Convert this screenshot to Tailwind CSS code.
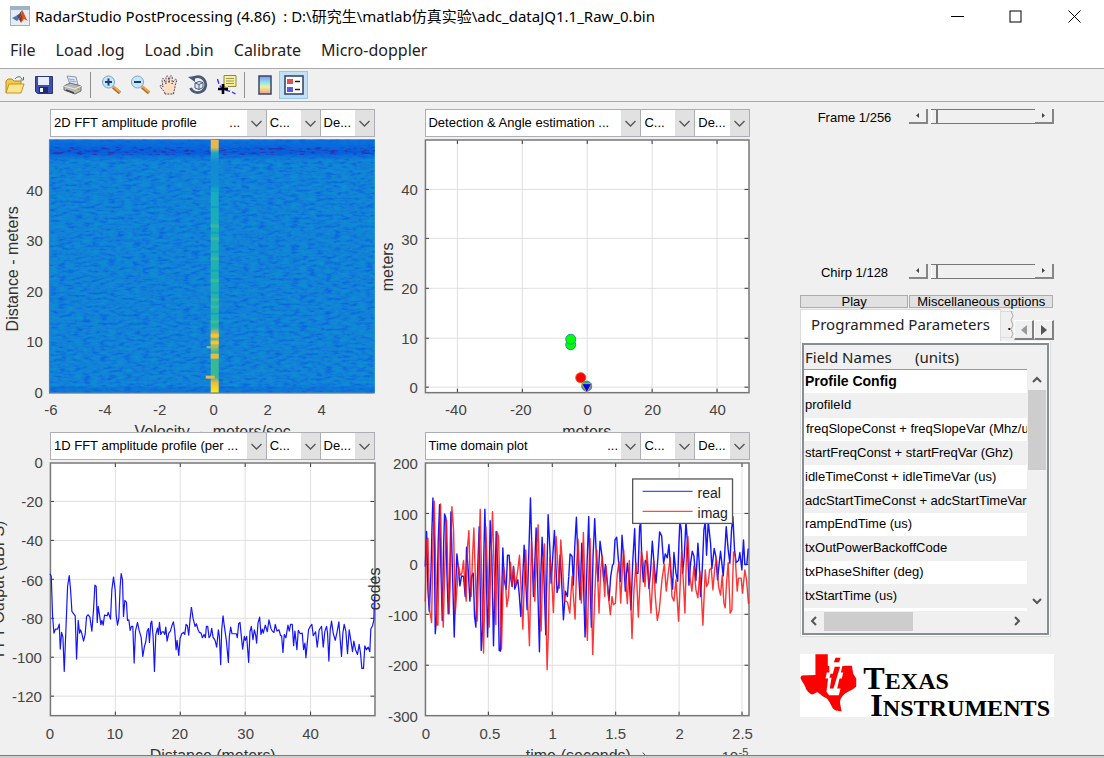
<!DOCTYPE html>
<html lang="en">
<head>
<meta charset="utf-8">
<title>RadarStudio PostProcessing</title>
<script src="https://cdn.jsdelivr.net/npm/@tailwindcss/browser@4"></script>
</head>
<body class="flex h-screen flex-col overflow-hidden bg-[#f0f0f0] font-['Liberation_Sans',Arial,sans-serif] text-[13px] text-black">

<header class="flex h-8 shrink-0 items-center bg-white pl-[10px]">
  <svg class="size-5 shrink-0" viewBox="0 0 20 20" aria-hidden="true">
    <rect x=".5" y=".5" width="19" height="19" fill="#e6edf3" stroke="#9fb0be"/>
    <rect x="1" y="1" width="18" height="3" fill="#9db3c6"/>
    <path d="M2 12l4-2 3 3-2 2z" fill="#3f78b5"/>
    <path d="M6 10l3-2 3-4-1 6-2 3z" fill="#5a4a6b"/>
    <path d="M12 4c2 2 3 7 6 11l-4-2-3 4-2-4c2-1 3-5 3-9z" fill="#d9531e"/>
    <path d="M12 5c0 4 0 7-1 11l-2-3c2-2 3-5 3-8z" fill="#8a2a1a"/>
  </svg>
  <h1 class="grow pl-[5px] font-['Noto_Sans','Noto_Sans_CJK_SC',sans-serif] text-[15px] whitespace-pre">RadarStudio PostProcessing (4.86)  : D:\研究生\matlab仿真实验\adc_dataJQ1.1_Raw_0.bin</h1>
  <button class="flex h-8 w-[58px] items-center justify-center" aria-label="Minimize"><svg class="size-[13px]" viewBox="0 0 13 13"><path d="M0 6.5h13" stroke="#000"/></svg></button>
  <button class="flex h-8 w-[58px] items-center justify-center" aria-label="Maximize"><svg class="size-[13px]" viewBox="0 0 13 13"><rect x="1" y="1" width="11" height="11" fill="none" stroke="#000"/></svg></button>
  <button class="flex h-8 w-[60px] items-center justify-center" aria-label="Close"><svg class="size-[13px]" viewBox="0 0 13 13"><path d="M.5.5l12 12M12.5.5l-12 12" stroke="#000"/></svg></button>
</header>

<nav class="flex h-9 shrink-0 items-center gap-5 bg-white pl-[10px] font-['Noto_Sans',sans-serif] text-[16px] text-[#222]">
  <button>File</button><button>Load .log</button><button>Load .bin</button><button>Calibrate</button><button>Micro-doppler</button>
</nav>

<div class="flex h-[34px] shrink-0 items-center border-y border-[#a9a9a9] pb-px" role="toolbar" aria-label="Figure tools">
  <button class="flex w-[29px] justify-center" aria-label="Open"><svg class="size-5" viewBox="0 0 20 20">
    <path d="M1 18V6l2-2h4l2 2h7v3" fill="#f2c94c" stroke="#b8891a"/><path d="M1 18l3-9h15l-3 9z" fill="#ffe58a" stroke="#c2952a"/><path d="M10 4c2-3 6-3 7 0m1.500-2v3h-3" fill="none" stroke="#4d6b94"/></svg></button>
  <button class="flex w-[29px] justify-center" aria-label="Save"><svg class="size-5" viewBox="0 0 20 20">
    <path d="M1.500 1.500h17v17h-15l-2-2z" fill="#3d4fb0" stroke="#2a3680"/><rect x="4" y="2" width="11" height="8" fill="#e8edfa"/><rect x="5" y="12" width="9" height="6" fill="#1d2b6e"/><rect x="6" y="13" width="3" height="4" fill="#f2f2f2"/></svg></button>
  <button class="flex w-[29px] justify-center" aria-label="Print"><svg class="size-5" viewBox="0 0 20 20">
    <path d="M4 1l9 1 2 8-8-1z" fill="#dfe9fb" stroke="#8a97b5"/><path d="M6 4l6 1M7 6l6 1" stroke="#7f93c0" stroke-width=".8"/><path d="M1 11l6-3 11 3v5l-6 3-11-4z" fill="#b9b9b9" stroke="#6f6f6f"/><path d="M1 11l11 3 6-3" fill="none" stroke="#eee"/><path d="M3 15l8 3" stroke="#444" stroke-width="1.500"/><circle cx="15.500" cy="14" r="1" fill="#c4a92d"/></svg></button>
  <span class="mr-[5px] ml-[3px] h-[26px] w-px bg-[#8f8f8f]"></span>
  <button class="flex w-[29px] justify-center" aria-label="Zoom in"><svg class="size-5" viewBox="0 0 20 20">
    <path d="M12 12l7 6" stroke="#a8702c" stroke-width="3.500"/><path d="M12 11l7 6" stroke="#f0a850" stroke-width="2"/><circle cx="7.500" cy="7" r="6" fill="#c4e8f8" stroke="#7fa3c4"/><path d="M7.500 3.500v7M4 7h7" stroke="#1c3a80" stroke-width="2"/></svg></button>
  <button class="flex w-[29px] justify-center" aria-label="Zoom out"><svg class="size-5" viewBox="0 0 20 20">
    <path d="M12 12l7 6" stroke="#a8702c" stroke-width="3.500"/><path d="M12 11l7 6" stroke="#f0a850" stroke-width="2"/><circle cx="7.500" cy="7" r="6" fill="#c4e8f8" stroke="#7fa3c4"/><path d="M4 7h7" stroke="#1c3a80" stroke-width="2"/></svg></button>
  <button class="flex w-[29px] justify-center" aria-label="Pan"><svg class="size-5" viewBox="0 0 20 20">
    <path d="M6 19c0-3-4-5-5-8 0-1 2-1 3 1L3 5c0-2 2-2 2.300 0L7 9V2.500c0-2 2.300-2 2.400 0L10 8l1-6c.2-2 2.500-1.500 2.300.3L13 9l2.500-4c1-1.500 2.800-.6 2 1L16 11c0 3-1 4-1.500 8z" fill="#ffe0c4" stroke="#4c4a68" stroke-dasharray="2 1"/></svg></button>
  <button class="flex w-[29px] justify-center" aria-label="Rotate 3D"><svg class="size-5" viewBox="0 0 20 20">
    <path d="M4 4a8 8 0 1 1-1.500 9" fill="none" stroke="#4b5a78" stroke-width="2.800"/><path d="M0 2l7-1v6z" fill="#4b5a78"/><path d="M7 8l4-1.500 4 1v5l-4 2-4-1.500zM7 8l4 1.500 4-2M11 9.500v5" fill="#dfe6f2" stroke="#4b5a78"/></svg></button>
  <button class="flex w-[29px] justify-center" aria-label="Data cursor"><svg class="size-5" viewBox="0 0 20 20">
    <path d="M.5 4c1 4 2 8 6 10s8 2 12 5" fill="none" stroke="#2a2aff" stroke-width="1.300" stroke-dasharray="5 2"/><path d="M7 .5h12v11h-8l-3 3v-3H7z" fill="#f5f0a0" stroke="#8f8a3a"/><path d="M9 3.500h8M9 6h8M9 8.500h8" stroke="#9b9655"/><path d="M6 9v10M1 14h10" stroke="#000" stroke-width="2.600"/></svg></button>
  <span class="mr-[5px] ml-[3px] h-[26px] w-px bg-[#8f8f8f]"></span>
  <button class="flex w-[29px] justify-center" aria-label="Insert colorbar"><svg class="size-5" viewBox="0 0 20 20">
    <defs><linearGradient id="cb" x2="0" y2="1"><stop offset="0" stop-color="#8f8fe0"/><stop offset=".35" stop-color="#8fe0f0"/><stop offset=".6" stop-color="#f0f0a0"/><stop offset="1" stop-color="#f0a080"/></linearGradient></defs>
    <rect x="4" y="1" width="12" height="18" fill="url(#cb)" stroke="#35496e" stroke-width="1.500"/></svg></button>
  <button class="flex h-7 w-[29px] items-center justify-center border border-[#90c8f6] bg-[#c4e0f5]" aria-label="Insert legend" aria-pressed="true"><svg class="size-5" viewBox="0 0 20 20">
    <rect x="1" y="1" width="18" height="18" fill="#fff" stroke="#35496e" stroke-width="1.600"/><rect x="3" y="4" width="6" height="5" fill="#e05050"/><rect x="3" y="12" width="6" height="5" fill="#5a5ae0"/><path d="M11 6.500h5M11 14.500h5" stroke="#222" stroke-width="1.500"/></svg></button>
</div>

<main class="grid grow grid-cols-[751fr_352fr] content-start overflow-hidden border-b border-[#7c7c7c] pt-[7px] pr-px">

  <div class="grid grid-cols-[376fr_375fr]">
  <!-- 2D FFT heat map -->
  <section>
    <div class="grid h-7 grid-cols-[217fr_54fr_55fr] pl-[50px]">
      <div class="relative"><select aria-label="Plot type" class="h-7 w-full appearance-none border border-[#adadb5] bg-white pl-[3px]"><option>2D FFT amplitude profile&nbsp;&nbsp;&nbsp;&nbsp;&nbsp;&nbsp;&nbsp;&nbsp;&nbsp;...</option></select><svg class="pointer-events-none absolute top-px right-px h-[26px] w-[19px] bg-[#e1e1e1]" viewBox="0 0 19 26"><path d="M4.500 11l5 5 5-5" fill="none" stroke="#555" stroke-width="1.300"/></svg></div>
      <div class="relative"><select aria-label="Channel" class="h-7 w-full appearance-none border border-l-0 border-[#adadb5] bg-white pl-[3px]"><option>C...</option></select><svg class="pointer-events-none absolute top-px right-px h-[26px] w-[19px] bg-[#e1e1e1]" viewBox="0 0 19 26"><path d="M4.500 11l5 5 5-5" fill="none" stroke="#555" stroke-width="1.300"/></svg></div>
      <div class="relative"><select aria-label="Device" class="h-7 w-full appearance-none border border-l-0 border-[#adadb5] bg-white pl-[3px]"><option>De...</option></select><svg class="pointer-events-none absolute top-px right-px h-[26px] w-[19px] bg-[#e1e1e1]" viewBox="0 0 19 26"><path d="M4.500 11l5 5 5-5" fill="none" stroke="#555" stroke-width="1.300"/></svg></div>
    </div>
    <svg class="block h-auto w-full" viewBox="0 0 376 295" role="img" aria-label="2D FFT amplitude profile">
      <defs>
        <filter id="noise" x="0" y="0" width="1" height="1" color-interpolation-filters="sRGB">
          <feTurbulence type="fractalNoise" baseFrequency="0.12 0.36" numOctaves="3" seed="4"/>
          <feColorMatrix values="1 0 0 0 0  1 0 0 0 0  1 0 0 0 0  0 0 0 0 1"/>
          <feComponentTransfer>
            <feFuncR type="table" tableValues="0.02 0.02 0.03 0.06 0.08 0.06 0.04 0.04 0.04"/>
            <feFuncG type="table" tableValues="0.34 0.36 0.40 0.46 0.51 0.55 0.58 0.60 0.62"/>
            <feFuncB type="table" tableValues="0.86 0.87 0.88 0.87 0.84 0.83 0.82 0.80 0.80"/>
          </feComponentTransfer>
        </filter>
        <filter id="dark" x="0" y="0" width="1" height="1" color-interpolation-filters="sRGB">
          <feTurbulence type="fractalNoise" baseFrequency="0.13 0.45" numOctaves="2" seed="9"/>
          <feColorMatrix values="0 0 0 0 0.2  0 0 0 0 0.18  0 0 0 0 0.65  5 0 0 0 -2.500"/>
        </filter>
        <linearGradient id="band" x2="0" y2="1"><stop offset="0" stop-color="#0560e0" stop-opacity=".5"/><stop offset=".6" stop-color="#0555dc" stop-opacity=".8"/><stop offset="1" stop-color="#0560e0" stop-opacity="0"/></linearGradient>
        <linearGradient id="ridge" gradientUnits="userSpaceOnUse" x1="0" y1="3" x2="0" y2="256">
          <stop offset="0" stop-color="#e8b84a"/><stop offset=".03" stop-color="#e8b84a"/><stop offset=".05" stop-color="#20a8c0"/><stop offset=".09" stop-color="#1488d4"/><stop offset=".18" stop-color="#1090d0"/><stop offset=".2" stop-color="#16acc0"/><stop offset=".45" stop-color="#20b0b0"/><stop offset=".74" stop-color="#24b4a8"/><stop offset=".77" stop-color="#e8b84a"/><stop offset=".82" stop-color="#a0bc64"/><stop offset=".84" stop-color="#38b894"/><stop offset=".94" stop-color="#38b894"/><stop offset=".96" stop-color="#f0b840"/><stop offset="1" stop-color="#f9f010"/>
        </linearGradient>
      </defs>
      <rect x="50" y="3" width="325" height="253" fill="#1280d8"/>
      <rect x="50" y="3" width="325" height="253" filter="url(#noise)" opacity=".75"/>
      <rect x="50" y="3" width="325" height="21" fill="url(#band)"/>
      <rect x="50" y="11" width="325" height="7" filter="url(#dark)" opacity=".8"/>
      <rect x="50" y="250" width="325" height="6" fill="#0560e0" opacity=".35"/>
      <rect x="211" y="3" width="8" height="253" fill="url(#ridge)"/>
      <path d="M211 89h8M211 102h8M211 122h8M211 144h8M211 163h8M211 170h8M211 185h8" stroke="#48bc90" stroke-width="3" opacity=".7"/>
      <path d="M211 54h8M211 70h8M211 96h8M211 115h8M211 134h8M211 156h8M211 177h8" stroke="#0c98cc" stroke-width="2" opacity=".6"/>
      <path d="M211 199h8M211 206h8" stroke="#fcc430" stroke-width="3"/>
      <path d="M211 202.500h8" stroke="#60bc84" stroke-width="2"/>
      <path d="M211 219.500h8" stroke="#e8b84a" stroke-width="5"/>
      <path d="M206 240.500h9" stroke="#e8b84a" stroke-width="3"/>
      <path d="M207 210.500h9" stroke="#98bc6c" stroke-width="2"/>
      <path d="M50 256.500h325M49.500 3v254" stroke="#777" fill="none"/>
      <g font-size="15" fill="#444">
        <g text-anchor="end"><text x="43" y="59">40</text><text x="43" y="109">30</text><text x="43" y="160">20</text><text x="43" y="210">10</text><text x="43" y="261">0</text></g>
        <g text-anchor="middle"><text x="51" y="278">-6</text><text x="105" y="278">-4</text><text x="160" y="278">-2</text><text x="214" y="278">0</text><text x="268" y="278">2</text><text x="322" y="278">4</text></g>
      </g>
      <g font-size="16" fill="#333" text-anchor="middle"><text x="213" y="300" class="whitespace-pre">Velocity  -  meters/sec</text><text transform="translate(18 132) rotate(-90)">Distance - meters</text></g>
    </svg>
  </section>

  <!-- Detection scatter -->
  <section>
    <div class="grid h-7 grid-cols-[217fr_54fr_55fr] pl-[50px]">
      <div class="relative"><select aria-label="Plot type" class="h-7 w-full appearance-none border border-[#adadb5] bg-white pl-[2px]"><option>Detection &amp; Angle estimation ...</option></select><svg class="pointer-events-none absolute top-px right-px h-[26px] w-[19px] bg-[#e1e1e1]" viewBox="0 0 19 26"><path d="M4.500 11l5 5 5-5" fill="none" stroke="#555" stroke-width="1.300"/></svg></div>
      <div class="relative"><select aria-label="Channel" class="h-7 w-full appearance-none border border-l-0 border-[#adadb5] bg-white pl-[3px]"><option>C...</option></select><svg class="pointer-events-none absolute top-px right-px h-[26px] w-[19px] bg-[#e1e1e1]" viewBox="0 0 19 26"><path d="M4.500 11l5 5 5-5" fill="none" stroke="#555" stroke-width="1.300"/></svg></div>
      <div class="relative"><select aria-label="Device" class="h-7 w-full appearance-none border border-l-0 border-[#adadb5] bg-white pl-[3px]"><option>De...</option></select><svg class="pointer-events-none absolute top-px right-px h-[26px] w-[19px] bg-[#e1e1e1]" viewBox="0 0 19 26"><path d="M4.500 11l5 5 5-5" fill="none" stroke="#555" stroke-width="1.300"/></svg></div>
    </div>
    <svg class="block h-auto w-full" viewBox="0 0 375 295" role="img" aria-label="Detection and angle estimation">
      <rect x="50.500" y="3" width="324" height="253" fill="#fff"/>
      <path d="M82.500 3v253M147.500 3v253M212.500 3v253M277.500 3v253M342.500 3v253M50 52.500h324M50 101.500h324M50 151.500h324M50 201.500h324M50 250.500h324" stroke="#dfdfdf" fill="none"/>
      <path d="M82.500 3v4m0 245v4M147.500 3v4m0 245v4M212.500 3v4m0 245v4M277.500 3v4m0 245v4M342.500 3v4m0 245v4M50 52.500h4m316 0h4M50 101.500h4m316 0h4M50 151.500h4m316 0h4M50 201.500h4m316 0h4M50 250.500h4m316 0h4" stroke="#333" fill="none"/>
      <rect x="50.500" y="3" width="324" height="253" fill="none" stroke="#777" stroke-width="1.500"/>
      <circle cx="196" cy="208" r="5" fill="#0f0" stroke="#2090a8"/><circle cx="196" cy="202.500" r="5" fill="#0f0" stroke="#2090a8"/>
      <circle cx="206" cy="241" r="5" fill="#f00" stroke="#d9531e"/>
      <circle cx="212" cy="249.500" r="5" fill="#30b060" stroke="#2090a8"/><path d="M207 247h10l-5 9z" fill="#00f" stroke="#e0a020"/>
      <g font-size="15" fill="#444">
        <g text-anchor="end"><text x="43" y="58">40</text><text x="43" y="108">30</text><text x="43" y="157">20</text><text x="43" y="207">10</text><text x="43" y="256">0</text></g>
        <g text-anchor="middle"><text x="81" y="278">-40</text><text x="146" y="278">-20</text><text x="213" y="278">0</text><text x="278" y="278">20</text><text x="343" y="278">40</text></g>
      </g>
      <g font-size="16" fill="#333" text-anchor="middle"><text x="212" y="300">meters</text><text transform="translate(18 130) rotate(-90)">meters</text></g>
    </svg>
  </section>

  <!-- 1D FFT range profile -->
  <section>
    <div class="grid h-7 grid-cols-[217fr_54fr_55fr] pl-[50px]">
      <div class="relative"><select aria-label="Plot type" class="h-7 w-full appearance-none border border-[#adadb5] bg-white pl-[3px]"><option>1D FFT amplitude profile (per ...</option></select><svg class="pointer-events-none absolute top-px right-px h-[26px] w-[19px] bg-[#e1e1e1]" viewBox="0 0 19 26"><path d="M4.500 11l5 5 5-5" fill="none" stroke="#555" stroke-width="1.300"/></svg></div>
      <div class="relative"><select aria-label="Channel" class="h-7 w-full appearance-none border border-l-0 border-[#adadb5] bg-white pl-[3px]"><option>C...</option></select><svg class="pointer-events-none absolute top-px right-px h-[26px] w-[19px] bg-[#e1e1e1]" viewBox="0 0 19 26"><path d="M4.500 11l5 5 5-5" fill="none" stroke="#555" stroke-width="1.300"/></svg></div>
      <div class="relative"><select aria-label="Device" class="h-7 w-full appearance-none border border-l-0 border-[#adadb5] bg-white pl-[3px]"><option>De...</option></select><svg class="pointer-events-none absolute top-px right-px h-[26px] w-[19px] bg-[#e1e1e1]" viewBox="0 0 19 26"><path d="M4.500 11l5 5 5-5" fill="none" stroke="#555" stroke-width="1.300"/></svg></div>
    </div>
    <svg class="block h-auto w-full overflow-visible" viewBox="0 0 376 295" role="img" aria-label="1D FFT amplitude profile">
      <rect x="50.500" y="3" width="325" height="253" fill="#fff"/>
      <path d="M115.500 3v253M180.500 3v253M245.500 3v253M311 3v253M50 41.500h325M50 80.500h325M50 119.500h325M50 158.500h325M50 197.500h325M50 236.500h325" stroke="#dfdfdf" fill="none"/>
      <path d="M115.500 3v4m0 245v4M180.500 3v4m0 245v4M245.500 3v4m0 245v4M311 3v4m0 245v4M50 41.500h4m317 0h4M50 80.500h4m317 0h4M50 119.500h4m317 0h4M50 158.500h4m317 0h4M50 197.500h4m317 0h4M50 236.500h4m317 0h4" stroke="#333" fill="none"/>
      <rect x="50.500" y="3" width="325" height="253" fill="none" stroke="#777" stroke-width="1.500"/>
      <g fill="none" stroke="#1414ff" stroke-width="3.600" stroke-linejoin="round">
        <polyline transform="translate(0 -30) scale(.33333)" points="150,432 154,440 158,560 162,610 167,598 173,598 178,583 181,658 185,608 189,622 193,725 198,600 203,470 208,437 212,480 216,545 222,553 226,558 230,688 235,572 239,610 242,600 246,612 251,634 256,612 260,560 265,555 270,562 276,604 281,540 285,466 289,470 292,578 295,530 299,556 303,585 306,572 310,586 314,556 322,558 325,548 328,556 332,568 336,480 341,442 346,480 349,556 353,586 357,566 361,470 364,431 368,450 371,560 375,512 380,518 383,572 387,570 391,602 395,590 399,590 403,700 407,604 413,578 418,602 424,622 429,680 434,650 438,636 442,604 446,596 449,638 453,580 456,574 460,620 464,725 468,615 473,595 476,614 479,578 483,614 487,606 491,606 495,614 498,592 502,634 507,610 512,604 517,586 521,576 525,604 529,660 532,632 537,677 541,626 546,612 551,608 555,614 559,584 563,588 567,616 571,568 575,532"/>
        <polyline transform="translate(190 -30) scale(.33333)" points="5,532 10,566 16,590 20,582 25,600 29,608 34,610 38,624 43,614 47,624 50,590 54,590 58,624 62,618 66,596 70,622 76,632 81,652 86,600 89,620 93,705 96,600 100,558 104,590 110,632 116,698 119,620 123,592 127,612 140,612 143,624 147,582 151,578 155,620 159,658 164,620 167,632 171,620 177,698 181,606 185,590 190,630 194,600 198,616 201,640 205,580 210,562 214,614 218,598 221,610 227,586 233,606 238,570 244,596 248,604 253,608 257,584 262,604 268,600 273,618 276,618 280,668 284,614 289,624 295,586 299,604 303,584 308,584 312,648 316,604 322,660 326,602 332,612 338,610 342,660 346,640 349,684 353,640 357,600 362,590 367,584 371,618 378,606 383,652 389,600 396,590 401,652 406,604 411,590 414,610 418,694 422,600 426,574 431,610 437,632 442,610 448,576 452,630 456,680 460,610 464,584 469,604 474,672 479,600 484,632 489,666 493,634 498,660 504,674 509,644 513,670 517,716 522,716 526,648 531,660 536,652 541,666 544,598 549,588 553,572 555,500"/>
      </g>
      <g font-size="15" fill="#444">
        <g text-anchor="end"><text x="43" y="8">0</text><text x="43" y="47">-20</text><text x="43" y="86">-40</text><text x="43" y="126">-60</text><text x="43" y="164">-80</text><text x="42" y="203">-100</text><text x="42" y="242">-120</text></g>
        <g text-anchor="middle"><text x="50" y="279">0</text><text x="115" y="279">10</text><text x="180" y="279">20</text><text x="246" y="279">30</text><text x="311" y="279">40</text></g>
      </g>
      <g font-size="16" fill="#333" text-anchor="middle"><text x="213" y="301">Distance (meters)</text><text transform="translate(4 129) rotate(-90)">FFT Output (dBFS)</text></g>
    </svg>
  </section>

  <!-- Time domain plot -->
  <section>
    <div class="grid h-7 grid-cols-[217fr_54fr_55fr] pl-[50px]">
      <div class="relative"><select aria-label="Plot type" class="h-7 w-full appearance-none border border-[#adadb5] bg-white pl-[2px]"><option>Time domain plot&nbsp;&nbsp;&nbsp;&nbsp;&nbsp;&nbsp;&nbsp;&nbsp;&nbsp;&nbsp;&nbsp;&nbsp;&nbsp;&nbsp;&nbsp;&nbsp;&nbsp;&nbsp;&nbsp;&nbsp;&nbsp;&nbsp;...</option></select><svg class="pointer-events-none absolute top-px right-px h-[26px] w-[19px] bg-[#e1e1e1]" viewBox="0 0 19 26"><path d="M4.500 11l5 5 5-5" fill="none" stroke="#555" stroke-width="1.300"/></svg></div>
      <div class="relative"><select aria-label="Channel" class="h-7 w-full appearance-none border border-l-0 border-[#adadb5] bg-white pl-[3px]"><option>C...</option></select><svg class="pointer-events-none absolute top-px right-px h-[26px] w-[19px] bg-[#e1e1e1]" viewBox="0 0 19 26"><path d="M4.500 11l5 5 5-5" fill="none" stroke="#555" stroke-width="1.300"/></svg></div>
      <div class="relative"><select aria-label="Device" class="h-7 w-full appearance-none border border-l-0 border-[#adadb5] bg-white pl-[3px]"><option>De...</option></select><svg class="pointer-events-none absolute top-px right-px h-[26px] w-[19px] bg-[#e1e1e1]" viewBox="0 0 19 26"><path d="M4.500 11l5 5 5-5" fill="none" stroke="#555" stroke-width="1.300"/></svg></div>
    </div>
    <svg class="block h-auto w-full overflow-visible" viewBox="0 0 375 295" role="img" aria-label="Time domain plot">
      <rect x="50.500" y="3" width="324" height="253" fill="#fff"/>
      <path d="M113.500 3v253M177.500 3v253M241 3v253M304.500 3v253M367.500 3v253M50 53.500h324M50 104.500h324M50 154.500h324M50 205.500h324" stroke="#dfdfdf" fill="none"/>
      <path d="M113.500 3v4m0 245v4M177.500 3v4m0 245v4M241 3v4m0 245v4M304.500 3v4m0 245v4M367.500 3v4m0 245v4M50 53.500h4m316 0h4M50 104.500h4m316 0h4M50 154.500h4m316 0h4M50 205.500h4m316 0h4" stroke="#333" fill="none"/>
      <rect x="50.500" y="3" width="324" height="253" fill="none" stroke="#777" stroke-width="1.500"/>
      <g fill="none" stroke="#1414ff" stroke-width="4.200" stroke-linejoin="round">
        <polyline transform="translate(-6 -30) scale(.33333)" points="169,410 173,305 177,480 181,545 186,430 189,300 192,204 196,330 199,612 203,560 208,330 212,224 216,420 220,572 224,350 227,252 231,265 234,430 238,552 242,480 246,246 250,400 256,622 260,480 264,372 269,420 273,468 278,438 284,440 289,500 293,352 298,420 303,514 308,440 313,430 317,560 321,592 326,430 331,290 334,470 337,662 341,600 345,370 348,238 352,400 356,622 360,500 364,272 369,380 374,648 378,480 382,305 387,420 391,662 395,664 399,480 402,354 406,450 412,478 416,376 421,376 425,440 430,470 434,410 438,478 442,465 447,450 451,490 456,560 461,460 466,346 470,440 475,540 480,370 485,204 489,350 494,500 498,400 502,294 506,440 512,666 516,440 520,322 525,430 531,615 535,400 538,254 543,350 547,460 552,380 557,302 561,400 565,488 570,465 574,376 578,440 584,570 590,484 596,500 600,440"/>
        <polyline transform="translate(184 -30) scale(.33333)" points="30,440 34,372 40,380 44,466 48,350 53,262 58,400 64,510 69,340 74,450 79,622 85,400 90,260 94,450 98,592 103,380 108,266 113,380 118,454 124,334 130,380 135,454 140,404 146,460 151,512 156,440 161,408 165,400 169,330 174,322 180,400 185,455 190,316 194,370 200,484 206,400 211,440 217,540 222,400 228,296 232,430 238,430 243,290 246,278 250,400 254,456 260,392 266,400 271,476 276,420 281,334 287,410 292,460 298,380 303,306 309,318 315,400 320,372 326,384 331,344 336,420 342,478 346,368 352,430 357,454 361,340 364,275 368,300 372,430 377,380 382,275 386,330 391,466 396,400 401,364 406,378 412,452 418,340 422,400 426,500 431,420 436,300 440,275 444,376 449,275 456,340 460,416 467,356 472,380 477,450 482,400 486,364 494,438 498,380 503,290 509,360 514,400 519,300 523,260 528,360 533,398 540,392 544,368 550,420 555,330 559,404 565,404 569,356"/>
      </g>
      <g fill="none" stroke="#f11" stroke-opacity=".85" stroke-width="4.200" stroke-linejoin="round">
        <polyline transform="translate(-6 -30) scale(.33333)" points="169,516 173,330 177,325 182,540 188,578 192,350 196,214 200,400 203,586 207,586 211,330 215,222 219,480 223,592 228,400 233,270 237,430 241,552 245,380 249,230 254,300 259,552 264,480 269,408 274,436 279,430 284,392 288,470 292,514 296,350 300,302 304,450 307,500 311,380 315,294 319,430 325,574 329,420 334,238 338,430 344,670 348,500 351,290 356,440 361,592 366,400 371,245 376,420 381,584 385,306 389,320 394,500 398,658 402,500 405,412 410,460 414,530 419,500 425,398 430,470 434,410 440,468 447,420 452,376 457,480 462,598 467,440 471,360 476,500 482,648 488,334 493,430 498,514 503,360 508,284 512,450 517,604 522,400 527,342 531,520 535,720 539,600 543,382 548,430 554,548 559,400 562,320 567,400 572,475 576,330 581,400 587,514 592,514 596,516"/>
        <polyline transform="translate(184 -30) scale(.33333)" points="26,516 33,550 40,440 44,500 49,568 54,400 58,328 63,440 68,520 74,308 79,480 86,632 90,450 94,326 98,500 102,674 108,500 114,360 121,550 126,420 131,380 138,500 142,408 148,490 155,554 160,500 164,525 170,520 176,430 181,396 186,520 191,420 195,360 200,440 206,522 212,392 216,500 220,626 226,480 232,400 239,562 244,460 248,364 254,400 259,470 265,364 270,440 277,550 285,392 290,500 296,572 302,540 310,450 317,402 323,484 330,420 335,384 340,500 346,514 352,450 360,574 369,366 374,450 379,550 384,360 388,320 394,440 400,484 406,408 412,480 418,504 424,424 428,490 433,586 440,420 444,470 449,460 453,420 458,414 463,480 469,412 474,388 480,470 486,496 491,436 496,520 500,534 504,460 509,398 515,550 520,540 525,366 530,380 536,484 540,445 548,445 552,490 559,420 564,450 570,522"/>
      </g>
      <rect x="258" y="19" width="100" height="44.500" fill="#fff" stroke="#555" stroke-width="1.300"/>
      <path d="M268 31.500h50" stroke="#4a4aff" stroke-width="1.300"/><path d="M268 51.500h50" stroke="#ff4a4a" stroke-width="1.300"/>
      <g font-size="14" fill="#222"><text x="323" y="38">real</text><text x="323" y="58">imag</text></g>
      <g font-size="15" fill="#444">
        <g text-anchor="end"><text x="43" y="9">200</text><text x="43" y="60">100</text><text x="43" y="110">0</text><text x="43" y="161">-100</text><text x="43" y="211">-200</text><text x="43" y="262">-300</text></g>
        <g text-anchor="middle"><text x="51" y="279">0</text><text x="115" y="279">0.5</text><text x="178" y="279">1</text><text x="241" y="279">1.5</text><text x="305" y="279">2</text><text x="368" y="279">2.5</text></g>
      </g>
      <g font-size="16" fill="#333"><text x="151" y="301">time</text><text x="186" y="301">(seconds)</text><text transform="translate(5 129) rotate(-90)" text-anchor="middle">codes</text></g>
      <g fill="#444"><path d="M268 293l3 3" stroke="#444"/><text x="347" y="302" font-size="15">10</text><text x="364" y="296" font-size="11">-5</text></g>
    </svg>
  </section>
  </div>

  <!-- Playback controls and parameters -->
  <aside class="flex flex-col pr-[49px] pl-[50px]">
    <div class="flex h-[15px] items-center">
      <label for="frame" class="w-[109px] shrink-0 pt-[3px] text-center">Frame 1/256</label>
      <button aria-label="Previous frame" class="flex h-[15px] w-[19px] shrink-0 items-center justify-center border-r-2 border-b-2 border-[#868686]"><svg class="size-[5px]" viewBox="0 0 5 5"><path d="M4 0v5L1 2.500z" fill="#444"/></svg></button>
      <input id="frame" type="range" min="1" max="256" value="1" class="ml-[3px] h-[15px] w-0 grow appearance-none border-y border-[#777] bg-transparent [&::-webkit-slider-thumb]:h-[13px] [&::-webkit-slider-thumb]:w-[7px] [&::-webkit-slider-thumb]:appearance-none [&::-webkit-slider-thumb]:border-r-2 [&::-webkit-slider-thumb]:border-l [&::-webkit-slider-thumb]:border-l-white [&::-webkit-slider-thumb]:border-r-[#777] [&::-webkit-slider-thumb]:bg-[#f0f0f0]">
      <button aria-label="Next frame" class="flex h-[15px] w-[19px] shrink-0 items-center justify-center border-r-2 border-b-2 border-[#868686]"><svg class="size-[5px]" viewBox="0 0 5 5"><path d="M1 0v5l3-2.500z" fill="#444"/></svg></button>
    </div>
    <div class="mt-[139px] flex h-4 items-center">
      <label for="chirp" class="w-[109px] shrink-0 pt-[3px] text-center">Chirp 1/128</label>
      <button aria-label="Previous chirp" class="flex h-[15px] w-[19px] shrink-0 items-center justify-center border-r-2 border-b-2 border-[#868686]"><svg class="size-[5px]" viewBox="0 0 5 5"><path d="M4 0v5L1 2.500z" fill="#444"/></svg></button>
      <input id="chirp" type="range" min="1" max="128" value="1" class="ml-[3px] h-[15px] w-0 grow appearance-none border-y border-[#777] bg-transparent [&::-webkit-slider-thumb]:h-[13px] [&::-webkit-slider-thumb]:w-[7px] [&::-webkit-slider-thumb]:appearance-none [&::-webkit-slider-thumb]:border-r-2 [&::-webkit-slider-thumb]:border-l [&::-webkit-slider-thumb]:border-l-white [&::-webkit-slider-thumb]:border-r-[#777] [&::-webkit-slider-thumb]:bg-[#f0f0f0]">
      <button aria-label="Next chirp" class="flex h-[15px] w-[19px] shrink-0 items-center justify-center border-r-2 border-b-2 border-[#868686]"><svg class="size-[5px]" viewBox="0 0 5 5"><path d="M1 0v5l3-2.500z" fill="#444"/></svg></button>
    </div>
    <div class="mt-4 grid h-[13px] grid-cols-[108fr_143fr] gap-px pr-px leading-[11px]">
      <button class="border border-[#adadad] bg-[#e1e1e1]">Play</button>
      <button class="border border-[#adadad] bg-[#e1e1e1] whitespace-nowrap">Miscellaneous options</button>
    </div>

    <div class="mt-px flex h-8 items-start" role="tablist">
      <button role="tab" aria-selected="true" class="h-8 w-[201px] shrink-0 border border-b-0 border-[#dcdcdc] bg-white pb-[3px] font-['Noto_Sans',sans-serif] text-[15px] text-[#222]">Programmed Parameters</button>
      <span class="relative mt-[2px] h-[27px] w-3 border-y border-[#dcdcdc]"><span class="absolute right-[2px] bottom-[2px] font-bold">.</span><svg class="absolute -top-px -right-px h-[27px] w-1" viewBox="0 0 4 27"><path d="M1 0l2 5-2 4 2 5-2 4 2 5-2 4" fill="none" stroke="#aaa"/></svg></span>
      <button aria-label="Scroll tabs left" class="mt-[11px] ml-px flex h-5 w-5 items-center justify-center border-t border-r-2 border-b-2 border-l border-t-white border-r-[#808080] border-b-[#808080] border-l-white"><svg class="size-[10px]" viewBox="0 0 10 10"><path d="M8 0v10L2 5z" fill="#999"/></svg></button>
      <button aria-label="Scroll tabs right" class="mt-[11px] flex h-5 w-5 items-center justify-center border-t border-r-2 border-b-2 border-l border-t-white border-r-[#808080] border-b-[#808080] border-l-white"><svg class="size-[10px]" viewBox="0 0 10 10"><path d="M2 0v10l6-5z" fill="#555"/></svg></button>
    </div>
    <div class="mr-[3px] border border-t-0 border-[#dcdcdc] bg-white p-px pt-[2px]">
      <div class="grid grid-cols-[1fr_20px] grid-rows-[266px_20px] border-2 border-[#878d96] bg-[#f0f0f0] pb-[2px]">
        <div class="overflow-hidden">
          <table class="w-full border-collapse text-left text-[13px] whitespace-pre">
            <thead><tr class="h-6 border-b border-[#999]"><th class="p-0 pl-px font-['Noto_Sans',sans-serif] text-[15px] leading-6 font-normal text-[#222]">Field Names      (units)</th></tr></thead>
            <tbody>
              <tr class="h-[23px] bg-white"><th class="p-0 pt-px pl-px text-[14px] font-bold">Profile Config</th></tr>
              <tr class="h-[25px]"><td class="p-0 pl-px">profileId</td></tr>
              <tr class="h-[23px] bg-white"><td class="p-0 pl-[2px]">freqSlopeConst + freqSlopeVar (Mhz/us)</td></tr>
              <tr class="h-6"><td class="p-0 pl-px">startFreqConst + startFreqVar (Ghz)</td></tr>
              <tr class="h-6 bg-white"><td class="p-0 pl-px">idleTimeConst + idleTimeVar (us)</td></tr>
              <tr class="h-6"><td class="p-0 pl-px">adcStartTimeConst + adcStartTimeVar (us)</td></tr>
              <tr class="h-[23px] bg-white"><td class="p-0 pl-px">rampEndTime (us)</td></tr>
              <tr class="h-[25px]"><td class="p-0 pl-px">txOutPowerBackoffCode</td></tr>
              <tr class="h-[23px] bg-white"><td class="p-0 pl-px">txPhaseShifter (deg)</td></tr>
              <tr class="h-6"><td class="p-0 pl-px">txStartTime (us)</td></tr>
              <tr class="h-6 bg-white"><td class="p-0"></td></tr>
            </tbody>
          </table>
        </div>
        <div class="mt-6 flex flex-col items-center pr-px">
          <svg class="my-[5px] h-[11px] w-3" viewBox="0 0 12 11"><path d="M2 8l4-4 4 4" fill="none" stroke="#555" stroke-width="2"/></svg>
          <div class="h-20 w-[18px] bg-[#cdcdcd]"></div>
          <svg class="mt-auto mb-1 h-[11px] w-3" viewBox="0 0 12 11"><path d="M2 3l4 4 4-4" fill="none" stroke="#555" stroke-width="2"/></svg>
        </div>
        <div class="flex items-center">
          <svg class="mr-1 ml-1 h-3 w-3" viewBox="0 0 12 12"><path d="M8 2L4 6l4 4" fill="none" stroke="#555" stroke-width="2"/></svg>
          <div class="h-[19px] w-[89px] bg-[#cdcdcd]"></div>
          <svg class="mr-1 ml-auto h-3 w-3" viewBox="0 0 12 12"><path d="M4 2l4 4-4 4" fill="none" stroke="#555" stroke-width="2"/></svg>
        </div>
      </div>
    </div>

    <svg class="mt-[17px] block h-auto w-full bg-white" viewBox="0 0 253 63" role="img" aria-label="Texas Instruments">
      <g transform="translate(-3 -3) scale(.33333)">
        <path d="M55 10h37v34c8 3 14-1 22 2 10-3 20 0 30-2h20l4 24 9 14v24c-10 10-24 14-34 22-12 10-16 20-14 30l4 22c-12 0-22-2-28-12-6-12-12-26-22-30-8-2-12-8-20-14-6-2-10 6-18 6-8-2-18-12-20-22-4-12-12-18-15-28l4-7 41-1z" fill="#f00"/>
        <path d="M96 44h40l-5 20h7l-4 18h-7l-7 30h10l-5 20H96l-8-10 5-40h-8l4-18h8z" fill="#fff"/>
        <path d="M113 46h16l-20 66H98l5-32h-6l3-12h7z" fill="#f00"/>
        <path d="M111 18h20l-6 22h-20z" fill="#fff"/><path d="M115 20h15l-4 14h-16z" fill="#f00"/>
        <path d="M111 38h20l-2 8h-20z" fill="#fff"/>
      </g>
      <g font-family="Liberation Serif, Times New Roman, serif" font-weight="bold" fill="#000">
        <text x="63" y="35" font-size="32">T<tspan font-size="24">EXAS</tspan></text>
        <text x="70" y="62" font-size="32">I<tspan font-size="24">NSTRUMENTS</tspan></text>
      </g>
    </svg>
  </aside>
</main>
<footer class="h-[2px] shrink-0 bg-[#cdcdcd]"></footer>
</body>
</html>
